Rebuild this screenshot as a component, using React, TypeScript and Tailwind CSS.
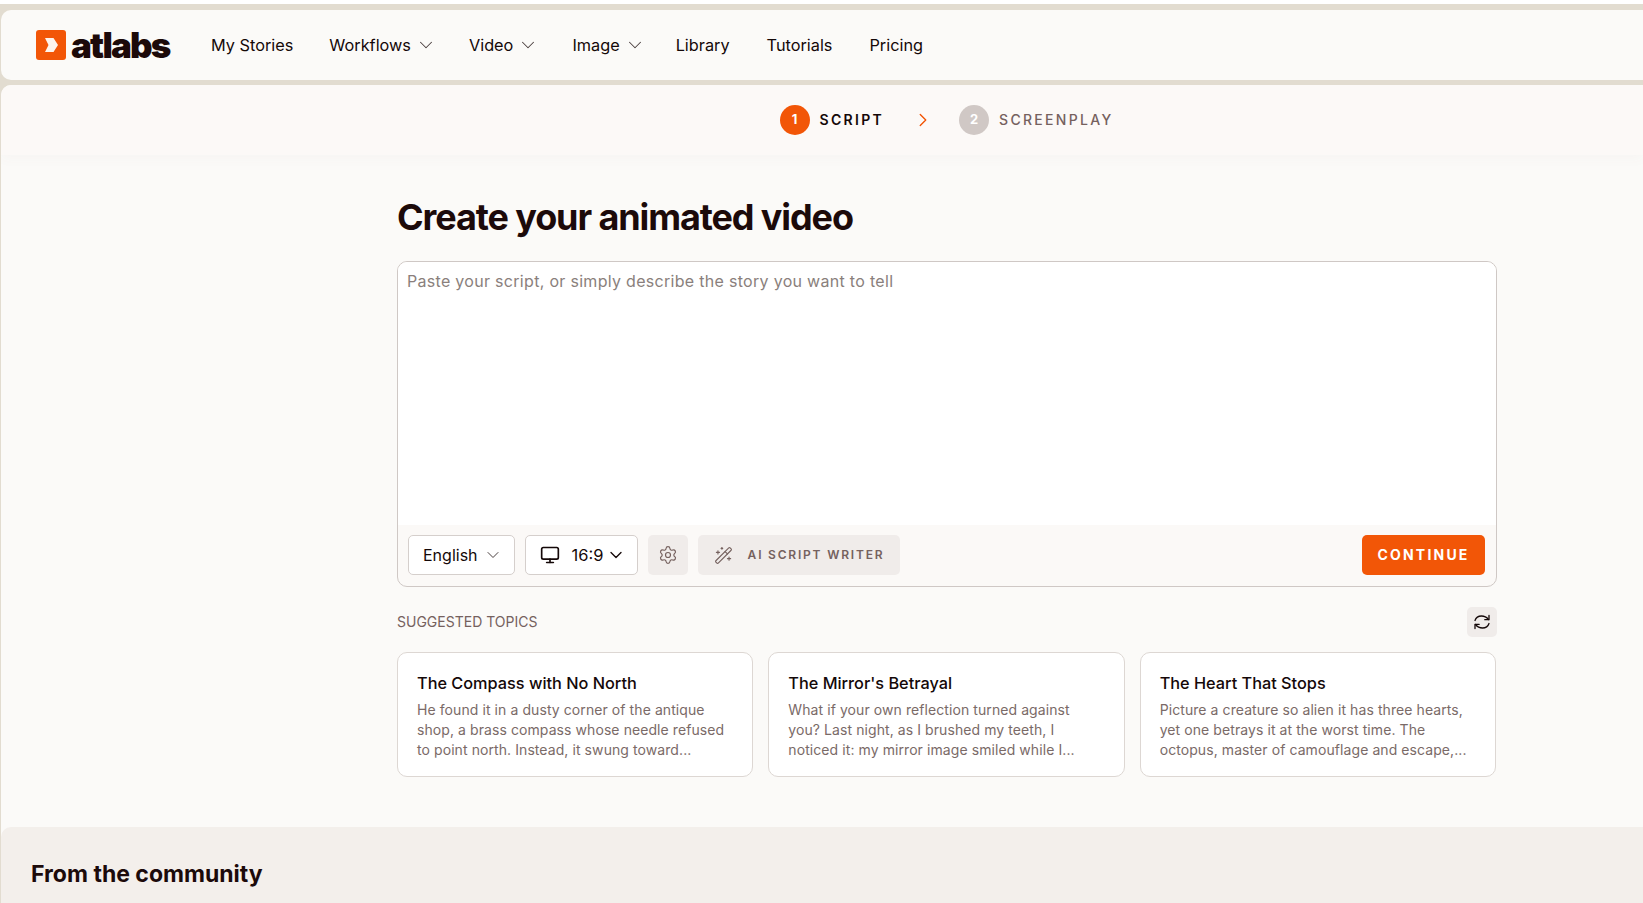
import { ChevronDown, ChevronRight, Monitor, Settings, WandSparkles } from "lucide-react";

const font = "font-['Inter','Liberation_Sans',sans-serif]";

function NavItem({ label, caret, gap }: { label: string; caret?: boolean; gap: string }) {
  return (
    <div className={`flex items-center ${gap}`}>
      <span className="text-[16.3px] leading-6 text-[#140808]">{label}</span>
      {caret && <ChevronDown size={22} strokeWidth={1.1} className="ml-[4px] text-[#4a3f3f]" />}
    </div>
  );
}

const topics = [
  {
    t: "The Compass with No North",
    a: "He found it in a dusty corner of the antique",
    b: "shop, a brass compass whose needle refused",
    c: "to point north. Instead, it swung toward...",
  },
  {
    t: "The Mirror's Betrayal",
    a: "What if your own reflection turned against",
    b: "you? Last night, as I brushed my teeth, I",
    c: "noticed it: my mirror image smiled while I...",
  },
  {
    t: "The Heart That Stops",
    a: "Picture a creature so alien it has three hearts,",
    b: "yet one betrays it at the worst time. The",
    c: "octopus, master of camouflage and escape,...",
  },
];

export default function App() {
  return (
    <div className={`${font} h-[903px] w-[1643px] overflow-hidden bg-[#fbfaf8]`}>
      <div className="h-[4px] bg-white" />
      <div className="flex h-[899px] flex-col bg-[#e2dcd0] pt-[6px]">
        <header className="ml-px flex h-[70px] shrink-0 items-center rounded-l-[10px] bg-[#fbfaf8] pl-[35px]">
          <div className="flex w-[175px] items-center">
            <svg width="30" height="30" viewBox="0 0 30 30" className="shrink-0">
              <rect width="30" height="30" rx="3" fill="#f25607" />
              <path d="M9 8h8.5l4.5 7-4.5 7H9l3.5-7z" fill="#fdf4ec" />
            </svg>
            <span className="ml-[5px] text-[35px] leading-[30px] font-black tracking-[-1.8px] text-[#1c0a0a]">atlabs</span>
          </div>
          <div className="flex items-center">
            <NavItem label="My Stories" gap="mr-[36px]" />
            <NavItem label="Workflows" caret gap="mr-[32px]" />
            <NavItem label="Video" caret gap="mr-[33px]" />
            <NavItem label="Image" caret gap="mr-[30px]" />
            <NavItem label="Library" gap="mr-[37px]" />
            <NavItem label="Tutorials" gap="mr-[37px]" />
            <NavItem label="Pricing" gap="" />
          </div>
        </header>

        <main className="mt-[5px] ml-px flex min-h-0 flex-1 flex-col overflow-hidden rounded-tl-[10px] bg-[#fbfaf8]">
          <div className="flex h-[70px] shrink-0 items-center justify-center bg-[#fcf9f7] pl-[249px] shadow-[0_4px_12px_rgba(120,100,80,0.03)]">
            <div className="flex h-[30px] w-[30px] items-center justify-center rounded-full bg-[#f25607] text-[13px] font-bold text-white">1</div>
            <span className="ml-[10px] pb-[1px] text-[14px] font-semibold tracking-[2.3px] text-[#140808]">SCRIPT</span>
            <ChevronRight size={22} strokeWidth={1.5} className="mr-[25px] ml-[28px] text-[#f25607]" />
            <div className="flex h-[30px] w-[30px] items-center justify-center rounded-full bg-[#d0c8c5] text-[13px] font-bold text-white">2</div>
            <span className="ml-[10px] pb-[1px] text-[14px] font-medium tracking-[2.3px] text-[#75615e]">SCREENPLAY</span>
          </div>

          <div className="mt-[37px] ml-[396px] w-[1100px] shrink-0">
            <h1 className="text-[36px] leading-[50px] font-bold tracking-[-1.1px] text-[#1c0a0a]">Create your animated video</h1>
            <div className="mt-[19px] flex h-[326px] flex-col overflow-hidden rounded-[10px] border border-[#cfc8c5] bg-[#fbf9f7]">
              <div className="h-[263px] bg-white px-[9px] pt-[7px] text-[16px] leading-6 tracking-[0.3px] text-[#8a7f7c]">
                Paste your script, or simply describe the story you want to tell
              </div>
              <div className="flex flex-1 items-start pt-[10px] pr-[11px] pl-[10px]">
                <div className="flex h-[40px] w-[107px] items-center rounded-[5px] border border-[#d5cfcc] bg-white pl-[14px] text-[16px] text-[#140808]">
                  English
                  <ChevronDown size={20} strokeWidth={1.2} className="ml-[5px] text-[#4a3f3f]" />
                </div>
                <div className="ml-[10px] flex h-[40px] w-[113px] items-center justify-center rounded-[5px] border border-[#d5cfcc] bg-white pl-[3px] text-[16.5px] text-[#140808]">
                  <Monitor size={20} strokeWidth={2} className="mr-[12px]" />
                  16:9
                  <ChevronDown size={20} strokeWidth={1.6} className="ml-[3px]" />
                </div>
                <div className="ml-[10px] flex h-[40px] w-[40px] items-center justify-center rounded-[5px] bg-[#f0ecea]">
                  <Settings size={20} strokeWidth={1.4} className="text-[#75615e]" />
                </div>
                <div className="ml-[10px] flex h-[40px] w-[202px] items-center justify-center rounded-[5px] bg-[#f0ecea]">
                  <WandSparkles size={19} strokeWidth={1.4} className="mr-[15px] text-[#75615e]" />
                  <span className="pb-[1px] text-[12px] font-semibold tracking-[1.8px] text-[#75615e]">AI SCRIPT WRITER</span>
                </div>
                <div className="ml-auto flex h-[40px] w-[123px] items-center justify-center rounded-[5px] bg-[#f25607] pb-[2px] text-[14px] font-bold tracking-[2.2px] text-white">
                  CONTINUE
                </div>
              </div>
            </div>

            <div className="mt-[20px] flex h-[30px] items-center justify-between">
              <span className="pb-[2px] text-[14px] text-[#75615e]">SUGGESTED TOPICS</span>
              <div className="flex h-[30px] w-[30px] items-center justify-center rounded-[5px] bg-[#f0ecea]">
                <svg width="18" height="18" viewBox="0 0 18 18" fill="none" stroke="#140808" strokeWidth="1.3" strokeLinecap="round" strokeLinejoin="round">
                  <path d="M2 7.5C3 4.5 5.5 3 8.5 3c3 0 5 1 7 3.5" />
                  <path d="M16 2.5v4.2h-4.2" />
                  <path d="M16 10.5c-1 3-3.5 4.5-6.5 4.5-3 0-5-1-7-3.5" />
                  <path d="M2 15.5v-4.2h4.2" />
                </svg>
              </div>
            </div>

            <div className="mt-[15px] grid grid-cols-3 gap-[15px] pr-px">
              {topics.map((x) => (
                <div key={x.t} className="h-[125px] rounded-[10px] border border-[#ddd7d3] bg-white px-[19px] pt-[18px]">
                  <div className="text-[16.3px] leading-6 font-medium text-[#140808]">{x.t}</div>
                  <div className="mt-[5px] text-[14px] leading-5 tracking-[0.08px] text-[#7a6a67]">
                    <div className="whitespace-nowrap">{x.a}</div>
                    <div className="whitespace-nowrap">{x.b}</div>
                    <div className="whitespace-nowrap">{x.c}</div>
                  </div>
                </div>
              ))}
            </div>
          </div>

          <section className="mt-[50px] flex-1 rounded-tl-[10px] bg-[#f3efeb] pt-[29px] pl-[30px]">
            <h2 className="text-[23px] leading-9 font-bold text-[#1c0a0a]">From the community</h2>
          </section>
        </main>
      </div>
    </div>
  );
}
